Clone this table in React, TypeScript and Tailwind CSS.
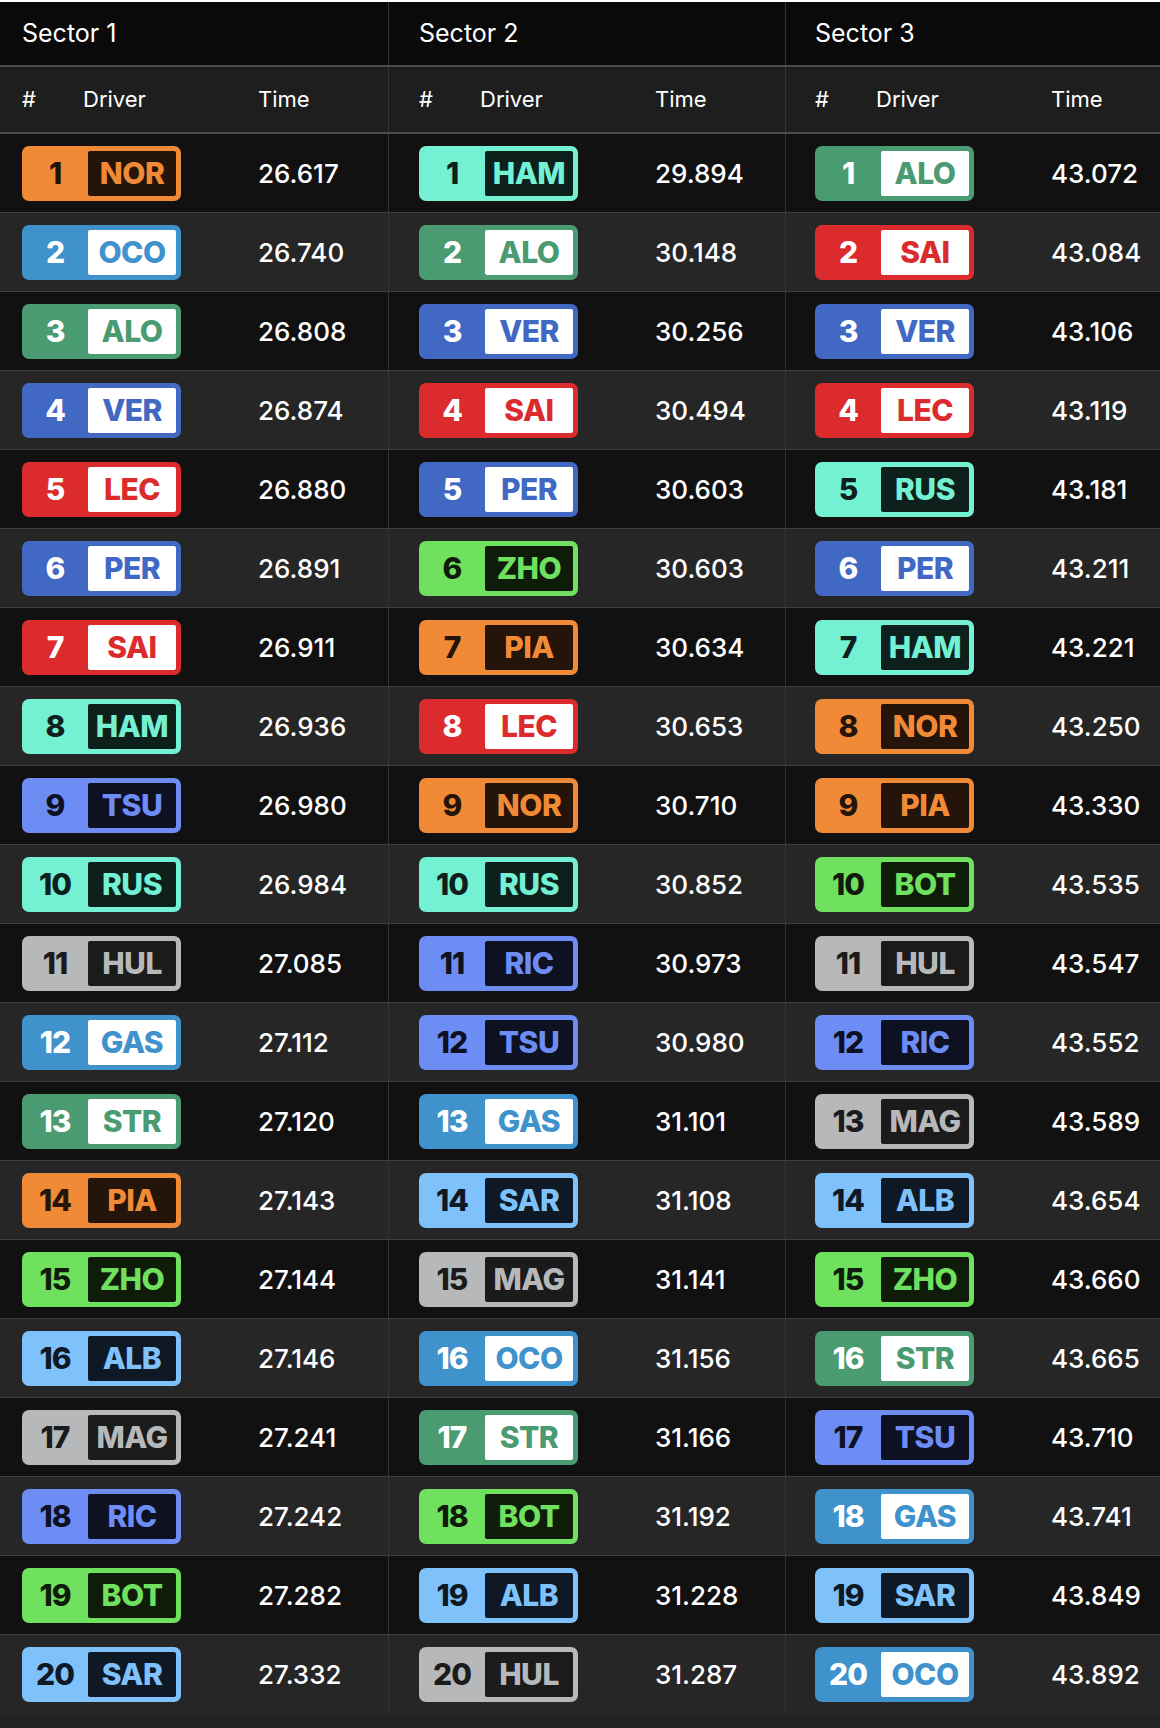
import React from 'react';

type Team = 'mcl' | 'alp' | 'amr' | 'rbr' | 'fer' | 'mer' | 'rb' | 'haas' | 'sau' | 'wil';

type Entry = { pos: number; code: string; time: string };

const driverTeam: Record<string, Team> = {
  NOR: 'mcl', PIA: 'mcl',
  OCO: 'alp', GAS: 'alp',
  ALO: 'amr', STR: 'amr',
  VER: 'rbr', PER: 'rbr',
  LEC: 'fer', SAI: 'fer',
  HAM: 'mer', RUS: 'mer',
  TSU: 'rb', RIC: 'rb',
  HUL: 'haas', MAG: 'haas',
  ZHO: 'sau', BOT: 'sau',
  ALB: 'wil', SAR: 'wil',
};

// outer colour, inner box, code text, number text
const teamStyles: Record<Team, { outer: string; inner: string; code: string; num: string }> = {
  mcl: { outer: 'bg-[#f18a36]', inner: 'bg-[#24140a]', code: 'text-[#f18a36]', num: 'text-[#24140a]' },
  alp: { outer: 'bg-[#3f92cb]', inner: 'bg-white', code: 'text-[#3f92cb]', num: 'text-white' },
  amr: { outer: 'bg-[#4a9a72]', inner: 'bg-white', code: 'text-[#4a9a72]', num: 'text-white' },
  rbr: { outer: 'bg-[#4169c3]', inner: 'bg-white', code: 'text-[#4169c3]', num: 'text-white' },
  fer: { outer: 'bg-[#dc2b2d]', inner: 'bg-white', code: 'text-[#dc2b2d]', num: 'text-white' },
  mer: { outer: 'bg-[#74f0d3]', inner: 'bg-[#0e201c]', code: 'text-[#74f0d3]', num: 'text-[#0e201c]' },
  rb: { outer: 'bg-[#6d8df5]', inner: 'bg-[#0d1122]', code: 'text-[#6d8df5]', num: 'text-[#0d1122]' },
  haas: { outer: 'bg-[#b6b8ba]', inner: 'bg-[#1b1b1b]', code: 'text-[#b6b8ba]', num: 'text-[#1b1b1b]' },
  sau: { outer: 'bg-[#70e05f]', inner: 'bg-[#0f1c0a]', code: 'text-[#70e05f]', num: 'text-[#0f1c0a]' },
  wil: { outer: 'bg-[#7fc2fb]', inner: 'bg-[#0e1925]', code: 'text-[#7fc2fb]', num: 'text-[#0e1925]' },
};

const parse = (rows: string): Entry[] =>
  rows
    .trim()
    .split('\n')
    .map((line, i) => {
      const [code, time] = line.trim().split(' ');
      return { pos: i + 1, code, time };
    });

const sector1 = parse(`
NOR 26.617
OCO 26.740
ALO 26.808
VER 26.874
LEC 26.880
PER 26.891
SAI 26.911
HAM 26.936
TSU 26.980
RUS 26.984
HUL 27.085
GAS 27.112
STR 27.120
PIA 27.143
ZHO 27.144
ALB 27.146
MAG 27.241
RIC 27.242
BOT 27.282
SAR 27.332
`);

const sector2 = parse(`
HAM 29.894
ALO 30.148
VER 30.256
SAI 30.494
PER 30.603
ZHO 30.603
PIA 30.634
LEC 30.653
NOR 30.710
RUS 30.852
RIC 30.973
TSU 30.980
GAS 31.101
SAR 31.108
MAG 31.141
OCO 31.156
STR 31.166
BOT 31.192
ALB 31.228
HUL 31.287
`);

const sector3 = parse(`
ALO 43.072
SAI 43.084
VER 43.106
LEC 43.119
RUS 43.181
PER 43.211
HAM 43.221
NOR 43.250
PIA 43.330
BOT 43.535
HUL 43.547
RIC 43.552
MAG 43.589
ALB 43.654
ZHO 43.660
STR 43.665
TSU 43.710
GAS 43.741
SAR 43.849
OCO 43.892
`);

const sectors = [sector1, sector2, sector3];

// first column sits a bit further left than the other two
const cellPad = ['pl-[22px]', 'pl-[30px] border-l border-[#343434]', 'pl-[29px] border-l border-[#343434]'];

const badgeFont = { fontFamily: 'Inter, "Noto Sans", sans-serif' };

const DriverBadge: React.FC<{ pos: number; code: string }> = ({ pos, code }) => {
  const s = teamStyles[driverTeam[code]];
  return (
    <div className={`flex items-stretch w-[159px] h-[55px] rounded-[7px] p-[5px] pl-0 ${s.outer}`} style={badgeFont}>
      <div className={`w-[66px] flex items-center justify-center text-[30px] font-extrabold tracking-[-1px] ${s.num}`}>
        {pos}
      </div>
      <div className={`flex-1 flex items-center justify-center rounded-[2px] text-[30px] font-extrabold tracking-[-0.5px] ${s.inner} ${s.code}`}>
        {code}
      </div>
    </div>
  );
};

const App: React.FC = () => {
  return (
    <div
      className="min-h-screen w-full bg-[#232323] border-t-2 border-white text-white"
      style={{ fontFamily: 'Inter, "Noto Sans", sans-serif' }}
    >
      <div className="grid grid-cols-[388px_397px_1fr] h-[65px] bg-[#0a0a0a] border-b-2 border-[#4d4d4d]">
        {['Sector 1', 'Sector 2', 'Sector 3'].map((title, i) => (
          <div key={title} className={`flex items-center text-[25px] ${cellPad[i]}`}>
            {title}
          </div>
        ))}
      </div>

      <div className="grid grid-cols-[388px_397px_1fr] h-[67px] bg-[#1e1e1e] border-b-2 border-[#4d4d4d]">
        {[0, 1, 2].map((i) => (
          <div key={i} className={`flex items-center text-[22px] ${cellPad[i]}`}>
            <span className="w-[61px]">#</span>
            <span className="w-[175px]">Driver</span>
            <span>Time</span>
          </div>
        ))}
      </div>

      {sector1.map((_, row) => (
        <div
          key={row}
          className={`grid grid-cols-[388px_397px_1fr] h-[79px] ${
            row < 19 ? 'border-b border-[#3d3d3d]' : ''
          } ${row % 2 === 0 ? 'bg-[#111111]' : 'bg-[#262626]'}`}
        >
          {sectors.map((sector, i) => {
            const e = sector[row];
            return (
              <div key={i} className={`flex items-center ${cellPad[i]}`}>
                <DriverBadge pos={e.pos} code={e.code} />
                <span className="ml-[77px] text-[26px] font-medium">{e.time}</span>
              </div>
            );
          })}
        </div>
      ))}
    </div>
  );
};

export default App;
